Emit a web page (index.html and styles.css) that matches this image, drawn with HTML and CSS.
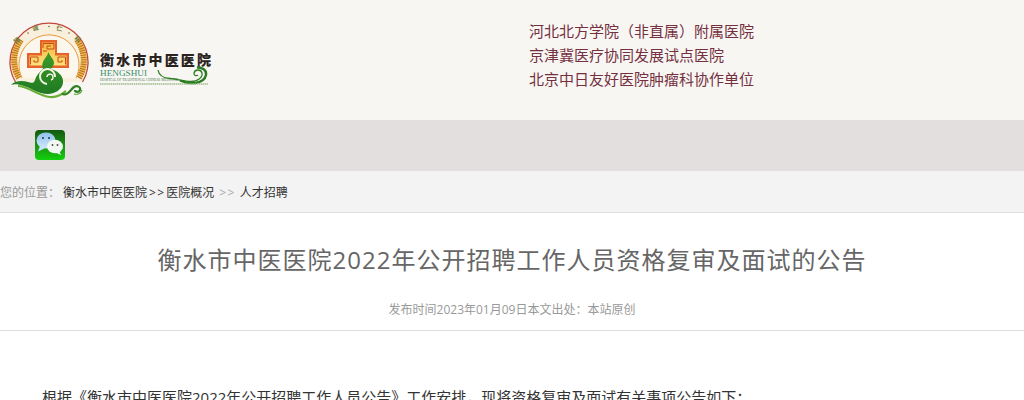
FILE: index.html
```html
<!DOCTYPE html>
<html lang="zh">
<head>
<meta charset="utf-8">
<title>衡水市中医医院</title>
<link rel="stylesheet" href="styles.css">
</head>
<body>
<header class="top">
  <div class="logo">
    <svg class="logo-art" width="215" height="82" viewBox="0 0 215 82">
      <defs>
        <linearGradient id="gold" x1="0" y1="0" x2="0" y2="1"><stop offset="0" stop-color="#f3b93c"/><stop offset="1" stop-color="#fbe27a"/></linearGradient>
        <linearGradient id="gourd" x1="0" y1="0" x2="0" y2="1"><stop offset="0" stop-color="#3f9a2a"/><stop offset="1" stop-color="#1f7a22"/></linearGradient>
      </defs>
      <g transform="translate(4 0)">
      <path d="M11.500 64A39 39 0 1 1 78.500 64" fill="#f8efdc" stroke="#c4473a" stroke-width="1.300"/>
      <path d="M17 22A34 34 0 0 0 15 60" fill="none" stroke="#eebc55" stroke-width="6"/>
      <path d="M17 22A34 34 0 0 0 15 60" fill="none" stroke="#b9701f" stroke-width="6" stroke-dasharray="1 1.300"/>
      <path d="M73 22A34 34 0 0 1 75 60" fill="none" stroke="#eebc55" stroke-width="6"/>
      <path d="M73 22A34 34 0 0 1 75 60" fill="none" stroke="#b9701f" stroke-width="6" stroke-dasharray="1 1.300"/>
      <path d="M18 60A30 30 0 1 1 72 60" fill="#fbf7ec" stroke="#ea9a3a" stroke-width="1"/>
      <g class="motto">
        <text x="12" y="26" transform="rotate(-40 12 26)">精</text>
        <text x="29" y="13" transform="rotate(-14 29 13)">诚</text>
        <text x="52" y="12" transform="rotate(12 52 12)">仁</text>
        <text x="70" y="21" transform="rotate(36 70 21)">和</text>
      </g>
      <circle cx="24" cy="15" r=".8" fill="#7a6a3a"/><circle cx="45" cy="8.500" r=".8" fill="#7a6a3a"/><circle cx="65" cy="15" r=".8" fill="#7a6a3a"/>
      <path d="M36 22H53V35H65V50H23V35H36Z" fill="#e5622a"/>
      <path d="M38 24.500H51V37.500H62.500V47.500H25.500V37.500H38Z" fill="url(#gold)"/>
      <g fill="none" stroke="#c9481f" stroke-width="1">
        <path d="M39 30V25.500H50V31H43V28H47"/>
        <path d="M39 33H43"/>
        <path d="M26.500 46.500V39H34V44H30V42"/>
        <path d="M61.500 46.500V39H54V44H58V42"/>
      </g>
      <path d="M44.500 34C46 39 50 41 50 45C50 48 47.500 49.500 47 51C54 53 60 58 59 65C58 72 50 76 44 76C34 76 27 70 20 68C14 66 10 66 7 67C10 63 18 62 24 64C28 65.500 30 65 31 62C32 58 35 54 39 51C38 49.500 38 46 39 44C40 41 43 39 44.500 34Z" fill="url(#gourd)"/>
      <path d="M43 66A7.500 7.500 0 1 1 51 59" fill="none" stroke="#f4f6e2" stroke-width="2"/>
      <path d="M47 62A3 3 0 1 0 43 59" fill="none" stroke="#f4f6e2" stroke-width="1.400"/>
      <path d="M14 68C24 68 34 78 46 79C54 79.500 58 76 62 73" fill="none" stroke="#68ad34" stroke-width="2.200"/>
      <path d="M58 76C64 78 66 72 70 69C73 67 77 69 76 72C75 74.500 71 74.500 71 72" fill="none" stroke="#2f7f22" stroke-width="2.200"/>
      <path d="M70 76C74 77 77 75 78 72" fill="none" stroke="#5aa32e" stroke-width="1.200"/>
      </g>

      <text class="brand-cn" x="100" y="47" textLength="111">衡水市中医医院</text>
      <text class="brand-en" x="100" y="58" textLength="47" lengthAdjust="spacingAndGlyphs">HENGSHUI</text>
      <text class="brand-sub" x="100" y="63" textLength="78" lengthAdjust="spacingAndGlyphs">HOSPITAL OF TRADITIONAL CHINESE MEDICINE</text>
      <path d="M158 52C159 58 163 60 170 60.500C178 61 184 63.500 191 63.500C198 63.500 203 59 202 55C201 51 195 51 194 55C193.500 57 196 58.500 198 57" fill="none" stroke="#2f7f22" stroke-width="1.300"/>
      <path d="M180 62.500C190 67 204 66 206 57C207 52 202 49 197 49.500" fill="none" stroke="#2a7a20" stroke-width="2.400"/>
      <path d="M100 66H208" stroke="#9dbb8c" stroke-width="1.400" stroke-dasharray="1.500 .6"/>
    </svg>
  </div>
  <div class="slogans">
    <p>河北北方学院（非直属）附属医院</p>
    <p>京津冀医疗协同发展试点医院</p>
    <p>北京中日友好医院肿瘤科协作单位</p>
  </div>
</header>
<nav class="bar">
  <svg class="wechat" width="30" height="30" viewBox="0 0 30 30">
    <defs>
      <linearGradient id="wx" x1="0" y1="0" x2="0" y2="1"><stop offset="0" stop-color="#125a10"/><stop offset=".5" stop-color="#1c8f14"/><stop offset="1" stop-color="#12d00c"/></linearGradient>
      <linearGradient id="bb" x1="0" y1="0" x2="0" y2="1"><stop offset="0" stop-color="#8fc0ec"/><stop offset="1" stop-color="#cfe8fa"/></linearGradient>
    </defs>
    <rect width="30" height="30" rx="4" fill="url(#wx)"/>
    <path d="M5 16L3 21.500L9.500 18.500Z" fill="#c4e2f8"/>
    <ellipse cx="11" cy="10.500" rx="9.500" ry="8" fill="url(#bb)"/>
    <path d="M24 20L26 25L20 22.500Z" fill="#f2f6f2"/>
    <ellipse cx="20" cy="16.500" rx="8" ry="6.800" fill="#f4f8f4"/>
    <circle cx="8" cy="8" r="1" fill="#173a4a"/><circle cx="14" cy="8" r="1" fill="#173a4a"/>
    <circle cx="17.500" cy="15" r=".9" fill="#3a4a3a"/><circle cx="22.500" cy="15" r=".9" fill="#3a4a3a"/>
  </svg>
</nav>
<div class="crumbs">
  <span class="here">您的位置：</span>
  <a class="c-link">衡水市中医医院</a><span class="arrow">&gt;&gt;</span><a class="c-link">医院概况</a>
  <span class="arrow dim">&gt;&gt;</span>
  <span class="c-link">人才招聘</span>
</div>
<main>
  <div class="head">
    <h1>衡水市中医医院2022年公开招聘工作人员资格复审及面试的公告</h1>
    <div class="meta">发布时间2023年01月09日本文出处：本站原创</div>
  </div>
  <p class="lead">根据《衡水市中医医院2022年公开招聘工作人员公告》工作安排，现将资格复审及面试有关事项公告如下：</p>
</main>
</body>
</html>
```
FILE: styles.css
```css
* { box-sizing: border-box; }
html, body { margin: 0; padding: 0; overflow: hidden; height: 400px; background: #fff; }
body { font-family: "Open Sans", "Noto Sans CJK SC", sans-serif; color: #333; }
p, h1 { margin: 0; font-weight: normal; }

.top { height: 120px; background: #f8f6f3; display: flex; align-items: flex-start; }
.logo { width: 529px; padding-top: 18px; flex: none; }
.logo-art { display: block; }
.motto text { font-family: "Noto Sans CJK SC", sans-serif; font-size: 6px; fill: #6f7a3a; font-weight: 700; }
.brand-cn { font-family: "Noto Sans CJK SC", sans-serif; font-size: 14px; font-weight: 900; fill: #2a2420; }
.brand-en { font-family: "Liberation Serif", serif; font-size: 8.500px; fill: #3a8f6a; }
.brand-sub { font-family: "Liberation Serif", serif; font-size: 3.500px; fill: #4a7a50; }
.slogans { padding-top: 19px; font-size: 15px; line-height: 24px; color: #74303f; }

.bar { height: 51px; background: #e2dfde; padding: 10px 0 0 35px; }
.wechat { display: block; }

.crumbs { height: 42px; background: #f3f3f3; border-bottom: 1px solid #dedede; font-size: 12px; line-height: 43px; white-space: nowrap; color: #333; display: flex; }
.here { color: #999; width: 63px; }
.c-link { color: #333; }
.arrow { margin: 0 1px 0 2px; letter-spacing: 1.300px; color: #333; }
.arrow.dim { color: #aaa; margin: 0 4px 0 5px; }

.head { height: 118px; border-bottom: 1px solid #dedede; text-align: center; display: flex; flex-direction: column; align-items: center; }
h1 { font-size: 24px; line-height: 36px; letter-spacing: 1px; color: #666; margin-top: 29px; }
.meta { margin-top: 23px; font-size: 12px; line-height: 18px; color: #999; }
.lead { margin: 54px 0 0 42px; font-size: 15px; line-height: 24px; color: #333; white-space: nowrap; }
```
